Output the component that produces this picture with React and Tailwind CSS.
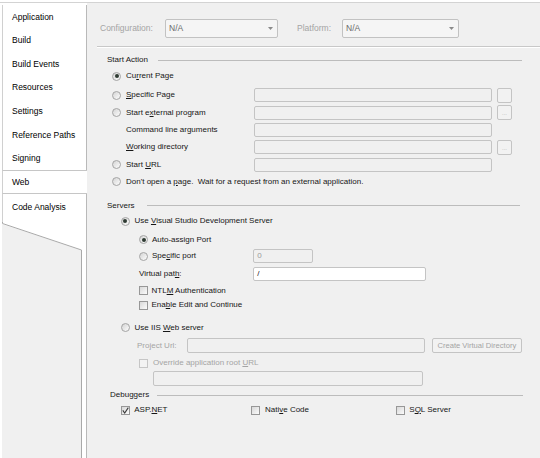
import React from "react";

const Radio = ({ checked }) => (
  <span className="inline-flex items-center justify-center w-[9px] h-[9px] rounded-full border border-[#a4a4a4] bg-linear-to-br from-[#d4d4d4] to-[#fdfdfd] shrink-0">
    {checked && <span className="w-[4px] h-[4px] rounded-full bg-[#2e3a32]" />}
  </span>
);

const Check = ({ checked, disabled }) => (
  <span
    className={
      "inline-flex items-center justify-center w-[9px] h-[9px] border shrink-0 " +
      (disabled
        ? "border-[#c6c6c6] bg-[#f3f3f3]"
        : "border-[#979797] bg-linear-to-br from-[#d8d8d8] to-[#fbfbfb]")
    }
  >
    {checked && (
      <svg width="7" height="7" viewBox="0 0 7 7">
        <path d="M0.8 3.4 L2.7 6 L6.3 0.6" stroke="#3a3a3a" strokeWidth="1.1" fill="none" />
      </svg>
    )}
  </span>
);

const Box = ({ className = "", children }) => (
  <div
    className={
      "border border-[#c4c4c4] rounded-[2px] flex items-center pl-[3px] shrink-0 " + className
    }
  >
    {children}
  </div>
);

const Dots = ({ faint }) => (
  <div className="ml-[5px] w-[15px] h-[15px] border border-[#c4c4c4] rounded-[2px] bg-[#f2f2f2] flex items-end justify-center pb-[3px] text-[6px] text-[#b0b0b0] shrink-0">
    {faint ? "..." : ""}
  </div>
);

const Dropdown = ({ className = "" }) => (
  <div
    className={
      "h-[19px] border border-[#c2c2c2] rounded-[2px] bg-[#f5f5f5] flex items-center pl-[3px] text-[#6b6b6b] text-[8.5px] " +
      className
    }
  >
    <span>N/A</span>
    <svg className="ml-auto mr-[4px]" width="5" height="3" viewBox="0 0 5 3">
      <path d="M0 0 L5 0 L2.5 3 Z" fill="#8a8a8a" />
    </svg>
  </div>
);

const Group = ({ label, className = "", gap = "ml-[9px]" }) => (
  <div className={"flex items-center " + className}>
    <span className="leading-none">{label}</span>
    <span className={"flex-1 h-0 border-t border-[#bcbcbc] " + gap} />
  </div>
);

const tabs = [
  "Application",
  "Build",
  "Build Events",
  "Resources",
  "Settings",
  "Reference Paths",
  "Signing",
];

export default function App() {
  return (
    <div className="w-[540px] h-[458px] bg-white pt-[2px] overflow-hidden font-['Liberation_Sans',Arial,sans-serif] text-[#161616]">
      <div className="flex h-[456px] border-t border-[#d3d3d3]">
        {/* sidebar */}
        <div className="w-[87px] shrink-0 pl-[2px] pt-[2.2px] flex flex-col bg-white text-[8.5px] text-black overflow-hidden">
          {tabs.map((t) => (
            <div
              key={t}
              className="shrink-0 h-[23.6px] border-l border-r border-l-[#d0d0d0] border-r-[#b9b9b9] flex items-center pl-[9px]"
            >
              {t}
            </div>
          ))}
          <div className="shrink-0 h-[23.6px] border-l border-t border-b border-[#c6c6c6] border-l-[#d0d0d0] flex items-center pl-[9px]">
            Web
          </div>
          <div className="shrink-0 h-[28px] border-l border-r border-l-[#d0d0d0] border-r-[#b9b9b9] flex items-center pl-[9px] pb-[2px]">
            Code Analysis
          </div>
          <div className="flex-1 min-h-0 overflow-hidden">
            <svg width="85" height="240" viewBox="0 0 85 240">
              <rect x="0" y="0" width="85" height="240" fill="#f0f0f0" />
              <polygon points="0,0 85,0 85,240 79,240 79,28 0,2" fill="#ffffff" />
              <path d="M0.5 0 L0.5 1.5 L79.5 28 L79.5 240" stroke="#a9a9a9" strokeWidth="1" fill="none" />
              <path d="M84.5 0 L84.5 240" stroke="#b9b9b9" strokeWidth="1" />
            </svg>
          </div>
        </div>

        {/* main panel */}
        <div className="flex-1 bg-[#f0f0f0] text-[8px] leading-none">
          {/* configuration row */}
          <div className="flex items-center mt-[16px] pl-[13px] h-[19px]">
            <span className="w-[65px] text-[#a4a4a4] text-[8.5px]">Configuration:</span>
            <Dropdown className="w-[113px]" />
            <span className="ml-[19px] w-[45px] text-[#a4a4a4] text-[8.5px]">Platform:</span>
            <Dropdown className="w-[117px]" />
          </div>
          <div className="mt-[8px] ml-[10px] border-t border-[#c8c8c8]" />
          <div className="border-t border-white ml-[10px]" />

          <div className="pl-[20px]">
            {/* Start Action */}
            <Group label="Start Action" className="mt-[6px] h-[12px] w-[415px]" gap="ml-[10px]" />
            <div className="pl-[5px]">
              <div className="flex items-center h-[20px]">
                <Radio checked />
                <span className="ml-[5px]">
                  Cu<u>r</u>rent Page
                </span>
              </div>
              <div className="flex items-center h-[18px]">
                <div className="w-[142px] flex items-center">
                  <Radio />
                  <span className="ml-[5px]">
                    <u>S</u>pecific Page
                  </span>
                </div>
                <Box className="w-[238px] h-[14px]" />
                <Dots />
              </div>
              <div className="flex items-center h-[17.5px]">
                <div className="w-[142px] flex items-center">
                  <Radio />
                  <span className="ml-[5px]">
                    Start e<u>x</u>ternal program
                  </span>
                </div>
                <Box className="w-[238px] h-[14px]" />
                <Dots faint />
              </div>
              <div className="flex items-center h-[17px]">
                <div className="w-[142px] flex items-center pl-[14px]">
                  <span>Command line arguments</span>
                </div>
                <Box className="w-[238px] h-[14px]" />
              </div>
              <div className="flex items-center h-[17.5px]">
                <div className="w-[142px] flex items-center pl-[14px]">
                  <span>
                    <u>W</u>orking directory
                  </span>
                </div>
                <Box className="w-[238px] h-[14px]" />
                <Dots faint />
              </div>
              <div className="flex items-center h-[17px]">
                <div className="w-[142px] flex items-center">
                  <Radio />
                  <span className="ml-[5px]">
                    Start <u>U</u>RL
                  </span>
                </div>
                <Box className="w-[238px] h-[14px]" />
              </div>
              <div className="flex items-center h-[17px]">
                <Radio />
                <span className="ml-[5px] whitespace-pre">
                  Don't open a <u>p</u>age.  Wait for a request from an external application.
                </span>
              </div>
            </div>

            {/* Servers */}
            <Group label="Servers" className="mt-[9.5px] h-[12px] w-[413px]" gap="ml-[12px]" />
            <div className="flex items-center h-[19.5px] pl-[13.5px]">
              <Radio checked />
              <span className="ml-[5px]">
                Use <u>V</u>isual Studio Development Server
              </span>
            </div>
            <div className="flex items-center h-[17px] pl-[32px]">
              <Radio checked />
              <span className="ml-[4px]">Auto-assign Port</span>
            </div>
            <div className="flex items-center h-[16px] pl-[32px]">
              <div className="w-[114.3px] flex items-center">
                <Radio />
                <span className="ml-[4px]">
                  Spe<u>c</u>ific port
                </span>
              </div>
              <Box className="w-[60px] h-[14.5px] text-[#9a9a9a]">0</Box>
            </div>
            <div className="flex items-center h-[20px] pl-[32px]">
              <div className="w-[114.3px]">
                Virtual pat<u>h</u>:
              </div>
              <Box className="w-[172.5px] h-[14.5px] bg-white">/</Box>
            </div>
            <div className="flex items-center h-[13px] pl-[32px]">
              <Check />
              <span className="ml-[3.5px]">
                NTL<u>M</u> Authentication
              </span>
            </div>
            <div className="flex items-center h-[16.5px] pl-[32px]">
              <Check />
              <span className="ml-[3.5px]">
                Ena<u>b</u>le Edit and Continue
              </span>
            </div>
            <div className="h-[6px]" />
            <div className="flex items-center h-[16.5px] pl-[13.5px]">
              <Radio />
              <span className="ml-[5px]">
                Use IIS <u>W</u>eb server
              </span>
            </div>
            <div className="flex items-center h-[19px] pl-[30px]">
              <span className="w-[50.4px] text-[#a4a4a4]">Project Url:</span>
              <Box className="w-[238px] h-[15px]" />
              <div className="ml-[6.6px] w-[89.7px] h-[15px] border border-[#c4c4c4] rounded-[2px] bg-[#f2f2f2] flex items-center justify-center text-[7.6px] text-[#a4a4a4] whitespace-nowrap">
                Create Virtual Directory
              </div>
            </div>
            <div className="flex items-center h-[16px] pl-[32px]">
              <Check disabled />
              <span className="ml-[5px] text-[#a4a4a4]">
                Override application root <u>U</u>RL
              </span>
            </div>
            <div className="flex items-center h-[15.5px] pl-[46.3px]">
              <Box className="w-[270px] h-[15px]" />
            </div>

            {/* Debuggers */}
            <Group label="Debuggers" className="mt-[2.5px] h-[12px] w-[413px] ml-[3px]" gap="ml-[8px]" />
            <div className="flex items-center h-[18px] pl-[13.7px]">
              <div className="w-[130px] flex items-center">
                <Check checked />
                <span className="ml-[4.6px]">
                  ASP.<u>N</u>ET
                </span>
              </div>
              <div className="w-[145px] flex items-center">
                <Check />
                <span className="ml-[5.3px]">
                  Nati<u>v</u>e Code
                </span>
              </div>
              <div className="flex items-center">
                <Check />
                <span className="ml-[4.6px]">
                  S<u>Q</u>L Server
                </span>
              </div>
            </div>
          </div>
        </div>
      </div>
    </div>
  );
}
